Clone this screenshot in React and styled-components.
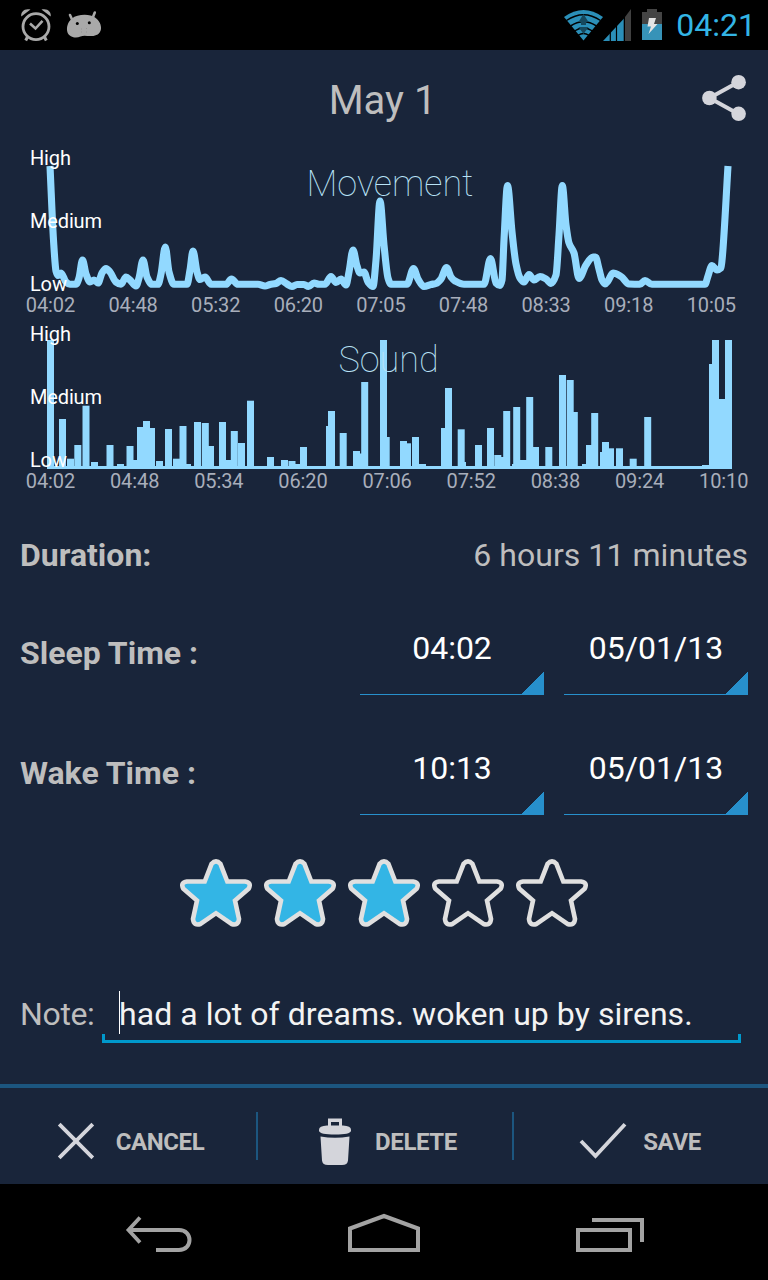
import React from 'react';
import styled, { createGlobalStyle } from 'styled-components';

const GlobalStyle = createGlobalStyle`
  * {
    box-sizing: border-box;
  }
  body {
    margin: 0;
    background: #000;
    font-family: Roboto, 'Noto Sans', sans-serif;
  }
`;

const Screen = styled.div`
  display: flex;
  flex-direction: column;
  width: 768px;
  height: 1280px;
  overflow: hidden;
  background: #19253a;
  color: #bebebe;
`;

const Icon = styled.svg`
  display: block;
  flex: none;
`;

const StatusBar = styled.header`
  display: flex;
  align-items: center;
  justify-content: space-between;
  height: 50px;
  padding: 0 14px 0 20px;
  background: #000;
`;

const StatusGroup = styled.div`
  display: flex;
  align-items: center;
  gap: ${props => props.$gap}px;
`;

const Clock = styled.span`
  margin: 0 -2px 0 4px;
  color: #33b5e5;
  font-size: 32px;
  line-height: 50px;
`;

const TitleBar = styled.div`
  display: grid;
  grid-template-columns: 66px 1fr 66px;
  height: 90px;
`;

const Title = styled.h1`
  grid-column: 2;
  margin: 0;
  padding-right: 3px;
  font-size: 40px;
  font-weight: 400;
  line-height: 102px;
  text-align: center;
`;

const ShareButton = styled.button`
  display: flex;
  padding: 24px 0 0;
  border: 0;
  background: none;
`;

const ChartSvg = styled.svg`
  display: block;
  flex: none;
`;

const ChartTitle = styled.text`
  fill: #b9e3f7;
  font-size: 36px;
  font-weight: 100;
  text-anchor: middle;
`;

const LevelLabel = styled.text`
  fill: #fff;
  font-size: 20px;
  letter-spacing: -0.15px;
`;

const TimeLabel = styled.text`
  fill: #a8aebb;
  font-size: 20px;
  letter-spacing: -0.1px;
  text-anchor: middle;
`;

const DurationRow = styled.div`
  display: flex;
  align-items: center;
  justify-content: space-between;
  height: 80px;
  margin-top: 23px;
  padding: 0 20px;
  font-size: 32px;
`;

const Duration = styled.span`
  letter-spacing: 0.06px;
`;

const TimeRow = styled.div`
  display: flex;
  align-items: center;
  height: 120px;
  padding: 0 20px 4px;
  gap: 20px;
  font-size: 32px;
`;

const Label = styled.span`
  flex: 1;
  font-weight: 700;
`;

const Spinner = styled.div`
  width: 184px;
  height: 94px;
  margin-bottom: 10px;
  border-bottom: 1px solid #2790cc;
  background: linear-gradient(to bottom right, transparent 50%, #2790cc 50%)
    right bottom / 22px 23px no-repeat;
  color: #fff;
  line-height: 94px;
  text-align: center;
`;

const Rating = styled.div`
  display: flex;
  justify-content: center;
  gap: 12px;
  padding-top: 24px;
`;

const NoteRow = styled.div`
  display: flex;
  align-items: center;
  height: 60px;
  margin-top: 56px;
  padding: 0 27px 0 20px;
  font-size: 32px;
`;

const NoteLabel = styled.span`
  width: 82px;
  padding-top: 2px;
  letter-spacing: -0.35px;
`;

const NoteField = styled.div`
  display: flex;
  align-items: center;
  flex: 1;
  height: 60px;
  padding: 2px 0 0 17px;
  background:
    linear-gradient(#0099cc, #0099cc) left bottom / 100% 3px no-repeat,
    linear-gradient(#0099cc, #0099cc) left bottom / 3px 9px no-repeat,
    linear-gradient(#0099cc, #0099cc) right bottom / 3px 9px no-repeat;
  color: #f3f3f3;
  letter-spacing: 0.05px;
  white-space: nowrap;
`;

const Caret = styled.span`
  width: 1px;
  height: 43px;
  margin: 0 -1px 3px 0;
  background: #fff;
`;

const Actions = styled.div`
  display: flex;
  align-items: center;
  height: 100px;
  margin-top: auto;
  border-top: 4px solid #1c567f;
`;

const Action = styled.button`
  display: flex;
  flex: 1;
  align-items: center;
  justify-content: center;
  gap: 16px;
  padding: 10px 0 0;
  border: 0;
  background: none;
  color: #bebebe;
  font-family: inherit;
  font-size: 24px;
  font-weight: 700;
  letter-spacing: -0.4px;
  line-height: 50px;
`;

const ActionText = styled.span`
  padding-top: 1px;
`;

const Divider = styled.span`
  width: 2px;
  height: 48px;
  margin: 0 -2px 0 0;
  background: #1c567f;
`;

const NavBar = styled.nav`
  display: flex;
  align-items: center;
  justify-content: center;
  gap: 155px;
  height: 96px;
  padding: 2px 0 0 2px;
  background: #000;
`;

const LEVELS = [
  { label: 'High', y: 25 },
  { label: 'Medium', y: 88 },
  { label: 'Low', y: 151 },
];

const MOVEMENT_TIMES = [
  '04:02', '04:48', '05:32', '06:20', '07:05', '07:48', '08:33', '09:18', '10:05',
];

const SOUND_TIMES = [
  '04:02', '04:48', '05:34', '06:20', '07:06', '07:52', '08:38', '09:24', '10:10',
];

const MOVEMENT = [
  [50, 26], [53.5, 100], [56, 131], [58, 135.5], [61, 133], [66, 142], [70, 144.3],
  [76, 144.3], [79, 138], [82.5, 120], [86, 134], [90, 142], [94, 140], [98, 143],
  [102, 133], [106, 128.5], [110, 132], [116, 142], [121, 144.3], [126, 137],
  [130, 140], [136, 146], [139, 138], [143, 120], [147, 137], [152, 144.3],
  [158, 144.3], [161, 134], [165.3, 107], [169, 132], [174, 144.3], [187, 144.3],
  [190, 130], [193, 111], [197, 132], [200, 139.5], [205, 137], [211, 144.3],
  [226, 144.3], [231.5, 139], [238, 144.3], [258, 144.3], [265, 146],
  [270, 144.5], [276, 143.5], [281, 140.5], [287, 144], [292, 146.5],
  [297, 144.5], [304, 144.5], [308.5, 146.5], [314, 143], [319, 144.3],
  [325, 144.3], [331, 136.5], [336, 142.5], [341, 139], [346, 145], [349, 132],
  [353, 110], [357, 126], [360, 133], [364, 132], [368, 142], [373, 146.5],
  [376, 120], [380, 61], [384, 105], [388, 138], [391, 144.3], [407, 144.3],
  [413.5, 128.5], [418, 139], [424, 146.5], [431, 144.5], [436, 143.5],
  [441, 139], [446.5, 127.5], [451, 137], [455, 141], [464, 144.3], [484, 144.3],
  [490.5, 118.5], [496, 143], [500, 145.5], [502, 140], [504, 100], [507.5, 45.5],
  [512, 92], [516, 124], [520, 138], [524, 142], [529, 134.5], [534, 140],
  [540, 136.5], [546, 139], [551, 143.5], [556, 135], [559, 95], [562.3, 45.5],
  [566, 85], [569, 103], [574, 113], [579, 138.5], [586, 125], [593, 117],
  [595.5, 117], [599, 129], [602, 140], [605, 144], [608, 141], [613, 133],
  [621, 136.5], [629, 144], [640, 144.3], [645, 140.5], [652, 144.3],
  [705, 144.3], [708, 136], [712, 125.5], [717, 130], [721, 128], [722.5, 115],
  [728, 26],
];

// [left edge, height] of each sample
const SOUND = [
  [47, 129], [59, 50], [67, 10.3], [74.3, 24], [82.5, 63.3], [91, 7], [106.5, 24],
  [117, 5], [126.5, 23], [131.5, 9], [137, 42], [143, 48], [148, 41], [156, 8],
  [165, 40], [173, 10.3], [179.5, 43], [184, 5], [194, 47], [201.8, 46],
  [207, 23], [219, 47], [225, 9], [230.8, 38], [238, 26], [247, 68.3],
  [267, 12], [281, 9], [288.5, 8], [295, 5], [300, 22], [326, 43], [328, 58],
  [339.7, 36], [353, 18], [356, 15.5], [361.2, 87], [380, 129], [382.7, 32],
  [400, 28], [404, 25.7], [412, 32], [419, 5], [441, 41], [445, 81],
  [457.7, 39.7], [459, 7], [475, 24], [487, 41], [494.3, 14], [498.5, 12],
  [503.2, 58], [512, 5], [513.2, 62], [520, 9], [526.2, 72], [532, 22],
  [545.3, 22], [559, 94], [566.7, 89], [570.8, 57], [582, 5], [586, 24],
  [591.2, 56], [600, 17], [602, 27], [607, 20.7], [616, 20.7], [629.7, 10.3],
  [644.2, 52], [702, 4], [709, 105], [712, 129], [718, 70], [725, 129],
];

// monotone cubic through the points, flat at every local extreme
const smoothPath = points => {
  const slope = points
    .slice(1)
    .map(([x, y], i) => (y - points[i][1]) / (x - points[i][0]));
  const tangent = points.map((_, i) => {
    if (i === 0) return slope[0];
    if (i === points.length - 1) return slope[i - 1];
    const a = slope[i - 1];
    const b = slope[i];
    return a * b <= 0 ? 0 : (2 * a * b) / (a + b);
  });
  return points.reduce((d, [x, y], i) => {
    if (i === 0) return `M${x} ${y}`;
    const [px, py] = points[i - 1];
    const h = (x - px) / 3;
    return `${d}C${px + h} ${py + h * tangent[i - 1]} ${x - h} ${y -
      h * tangent[i]} ${x} ${y}`;
  }, '');
};

const Chart = ({ title, titleX, times, step, children }) => (
  <ChartSvg width="768" height="176" viewBox="0 0 768 176">
    {children}
    <ChartTitle x={titleX} y="56">
      {title}
    </ChartTitle>
    {LEVELS.map(({ label, y }) => (
      <LevelLabel key={label} x="30" y={y}>
        {label}
      </LevelLabel>
    ))}
    {times.map((time, i) => (
      <TimeLabel key={time} x={50.5 + i * step} y="172">
        {time}
      </TimeLabel>
    ))}
  </ChartSvg>
);

const Star = ({ filled }) => (
  <Icon width="72" height="68" viewBox="0 0 72 68">
    <path
      d="M31.6 4.800Q36 0 40.400 4.800L47.300 22.500H65Q72 23.500 68.600 29.800L55 41.500L59 60Q58.400 67 51.500 65L36 54.200L20.500 65Q13.600 67 13 60L17 41.500L3.400 29.800Q0 23.500 7 22.500H24.700Z"
      fill={filled ? '#33b5e5' : 'none'}
      stroke="#e0e0e0"
      strokeWidth="4.600"
    />
  </Icon>
);

const AlarmIcon = () => (
  <Icon width="32" height="34" viewBox="20 8 32 34" fill="none" stroke="#a9a9a9">
    <circle cx="36" cy="26.6" r="13" strokeWidth="2.8" />
    <path d="M30 23.5L35.5 28.5L42.5 20.8" strokeWidth="2.6" />
    <path d="M27.5 37L25.7 40.5M44.5 37L46.3 40.5" strokeWidth="3" />
    <path
      d="M21.3 16.5C20.5 12 24.5 8 30.5 9.6ZM50.7 16.5C51.5 12 47.5 8 41.5 9.6Z"
      fill="#a9a9a9"
      stroke="none"
    />
  </Icon>
);

const BeanIcon = () => (
  <Icon width="36" height="34" viewBox="66 8 36 34">
    <path
      d="M70 15L72.3 20M94.8 12.5L93 17"
      stroke="#a9a9a9"
      strokeWidth="2.6"
      strokeLinecap="round"
    />
    <path
      d="M72 18.5C77 14 90 13.5 95 17.5C99.5 20.5 101.5 25.5 101 29C100.2 34 96 36 92 36C87 36.3 84 35 80.5 36.6C76 38.5 69.5 37.5 67.5 32.5C66 28 67.5 22 72 18.5Z"
      fill="#a9a9a9"
    />
    <circle cx="77.3" cy="23.5" r="1.5" />
    <circle cx="89.3" cy="22.7" r="1.5" />
    <path d="M81 29h1M86 28.5h1M81 32h1M86 32h1" stroke="#939393" />
  </Icon>
);

const WifiIcon = () => (
  <Icon width="39" height="34" viewBox="565 8 39 34">
    <path d="M584.5 40.5L565 17Q584.5 3 604 17Z" fill="#2b8fb8" />
    <path
      d="M567.5 20.5Q584.5 9 601.5 20.5M571.5 26Q584.5 17.5 597.5 26M575.5 31Q584.5 25 593.5 31M579 35.3Q584.5 31.8 590 35.3"
      fill="none"
      stroke="#000"
      strokeWidth="1.5"
    />
    <path
      d="M584.5 14L589.5 22H587V25H582V22H579.5ZM584.5 34L579.5 27H589.5Z"
      fill="#16495e"
    />
  </Icon>
);

const SignalIcon = () => (
  <Icon width="29" height="34" viewBox="602 8 29 34">
    <path d="M602 41L623 18.5V41Z" fill="#2b8fb8" />
    <path d="M624 17L630 9V41H624Z" fill="#404040" />
    <path d="M609.3 30V41M615.5 24V41M623.3 16V41" stroke="#000" strokeWidth="1.2" />
  </Icon>
);

const BatteryIcon = () => (
  <Icon width="20" height="34" viewBox="642 8 20 34">
    <path d="M647 9H657V12H662V24H642V12H647Z" fill="#444" />
    <path d="M642 24H662V40H642Z" fill="#3793b8" />
    <path d="M649 18H656L654 24H657.5L648.5 34L651 26.5H647.5Z" fill="#e4e4e4" />
  </Icon>
);

const ShareIcon = () => (
  <Icon width="46" height="48" viewBox="702 74 46 48" fill="#d4d5db">
    <path d="M738.5 82L709.5 98L738.5 114" fill="none" stroke="#d4d5db" strokeWidth="4" />
    <circle cx="738.6" cy="82.2" r="7.3" />
    <circle cx="709.4" cy="98" r="7.3" />
    <circle cx="738.6" cy="113.8" r="7.3" />
  </Icon>
);

const CancelIcon = () => (
  <Icon width="48" height="48" viewBox="0 0 48 48" fill="none" stroke="#d4d5db" strokeWidth="3.8">
    <path d="M7.2 7.2L40.8 40.8M40.8 7.2L7.2 40.8" />
  </Icon>
);

const DeleteIcon = () => (
  <Icon width="48" height="48" viewBox="0 0 48 48" fill="#d4d5db">
    <path d="M18.5 10V3.5H29.5V10" fill="none" stroke="#d4d5db" strokeWidth="3" />
    <path d="M17 1.5H31V5H17Z" />
    <path d="M8 12.5Q8 9 16 8.500H32Q40 9 40 12.500V14Q39 17.500 24 17.500Q9 17.500 8 14Z" />
    <path d="M9.500 19.500Q24 22 38.500 19.500L37 43.500Q36.500 48 31 48H17Q11.500 48 11 43.500Z" />
  </Icon>
);

const SaveIcon = () => (
  <Icon width="48" height="48" viewBox="0 0 48 48" fill="none" stroke="#d4d5db" strokeWidth="3.8">
    <path d="M2 24L16.500 39L46 7.200" />
  </Icon>
);

const BackIcon = () => (
  <Icon width="68" height="40" viewBox="126 1213 68 40" fill="none" stroke="#a3a3a3" strokeWidth="4">
    <path d="M130 1230H180C194 1230 194 1250 180 1250H157" />
    <path d="M141 1217.5L129.5 1230L141 1242.5" strokeWidth="3.8" />
  </Icon>
);

const HomeIcon = () => (
  <Icon width="72" height="40" viewBox="348 1213 72 40" fill="none" stroke="#a3a3a3" strokeWidth="4">
    <path d="M350 1250V1228.5L384 1216L418 1228.5V1250Z" />
  </Icon>
);

const RecentIcon = () => (
  <Icon width="70" height="40" viewBox="575 1213 70 40" fill="none" stroke="#a3a3a3" strokeWidth="4">
    <path d="M578 1230H630V1250H578ZM592 1220H642V1242" />
  </Icon>
);

const App = () => (
  <>
    <GlobalStyle />
    <Screen>
      <StatusBar>
        <StatusGroup $gap={14}>
          <AlarmIcon />
          <BeanIcon />
        </StatusGroup>
        <StatusGroup $gap={10}>
          <StatusGroup>
            <WifiIcon />
            <SignalIcon />
          </StatusGroup>
          <BatteryIcon />
          <Clock>04:21</Clock>
        </StatusGroup>
      </StatusBar>

      <TitleBar>
        <Title>May 1</Title>
        <ShareButton aria-label="Share">
          <ShareIcon />
        </ShareButton>
      </TitleBar>

      <Chart title="Movement" titleX="390" times={MOVEMENT_TIMES} step={82.6}>
        <path
          d={smoothPath(MOVEMENT)}
          fill="none"
          stroke="#92d9ff"
          strokeWidth="7.1"
          strokeLinejoin="round"
        />
      </Chart>
      <Chart title="Sound" titleX="388.5" times={SOUND_TIMES} step={84.15}>
        <rect x="47" y="150" width="685" height="3" fill="#92d9ff" />
        {SOUND.map(([x, h]) => (
          <rect key={x} x={x} y={153 - h} width="7" height={h} fill="#92d9ff" />
        ))}
      </Chart>

      <DurationRow>
        <Label>Duration:</Label>
        <Duration>6 hours 11 minutes</Duration>
      </DurationRow>
      <TimeRow>
        <Label>Sleep Time :</Label>
        <Spinner>04:02</Spinner>
        <Spinner>05/01/13</Spinner>
      </TimeRow>
      <TimeRow>
        <Label>Wake Time :</Label>
        <Spinner>10:13</Spinner>
        <Spinner>05/01/13</Spinner>
      </TimeRow>

      <Rating>
        {[1, 2, 3, 4, 5].map(value => (
          <Star key={value} filled={value <= 3} />
        ))}
      </Rating>

      <NoteRow>
        <NoteLabel>Note:</NoteLabel>
        <NoteField>
          <Caret />
          had a lot of dreams. woken up by sirens.
        </NoteField>
      </NoteRow>

      <Actions>
        <Action>
          <CancelIcon />
          <ActionText>CANCEL</ActionText>
        </Action>
        <Divider />
        <Action>
          <DeleteIcon />
          <ActionText>DELETE</ActionText>
        </Action>
        <Divider />
        <Action>
          <SaveIcon />
          <ActionText>SAVE</ActionText>
        </Action>
      </Actions>

      <NavBar>
        <BackIcon />
        <HomeIcon />
        <RecentIcon />
      </NavBar>
    </Screen>
  </>
);

export default App;
